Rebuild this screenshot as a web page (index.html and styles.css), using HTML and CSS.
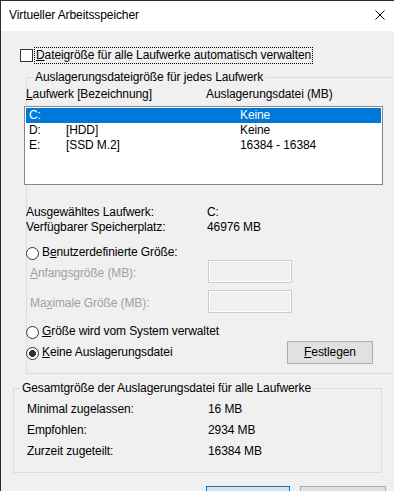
FILE: index.html
```html
<!DOCTYPE html>
<html lang="de">
<head>
<meta charset="utf-8">
<title>Virtueller Arbeitsspeicher</title>
<link rel="stylesheet" href="styles.css">
</head>
<body>
<div class="window">
  <div class="titlebar">
    <span class="title">Virtueller Arbeitsspeicher</span>
    <svg class="close" width="10" height="10" viewBox="0 0 10 10"><path d="M0.5 0.5 L9.5 9.5 M9.5 0.5 L0.5 9.5" stroke="#000" stroke-width="1" fill="none"/></svg>
  </div>
  <div class="content">
    <div class="auto-row">
      <span class="checkbox"></span>
      <span class="focus-label"><u>D</u>ateigröße für alle Laufwerke automatisch verwalten</span>
    </div>

    <fieldset class="group group-drives">
      <legend>Auslagerungsdateigröße für jedes Laufwerk</legend>
      <div class="list-header">
        <span class="col-drive"><u>L</u>aufwerk [Bezeichnung]</span>
        <span>Auslagerungsdatei (MB)</span>
      </div>
      <div class="listbox">
        <div class="list-row selected"><span>C:</span><span></span><span>Keine</span></div>
        <div class="list-row"><span>D:</span><span>[HDD]</span><span>Keine</span></div>
        <div class="list-row"><span>E:</span><span>[SSD M.2]</span><span>16384 - 16384</span></div>
      </div>
      <div class="info">
        <div class="info-row"><span class="info-label">Ausgewähltes Laufwerk:</span><span>C:</span></div>
        <div class="info-row"><span class="info-label">Verfügbarer Speicherplatz:</span><span>46976 MB</span></div>
      </div>
      <div class="radio-row radio-custom">
        <span class="radio"></span>
        <span class="radio-label">B<u>e</u>nutzerdefinierte Größe:</span>
      </div>
      <div class="field-row">
        <span class="field-label"><u>A</u>nfangsgröße (MB):</span>
        <span class="textbox"></span>
      </div>
      <div class="field-row field-second">
        <span class="field-label">Ma<u>x</u>imale Größe (MB):</span>
        <span class="textbox"></span>
      </div>
      <div class="radio-row radio-system">
        <span class="radio"></span>
        <span class="radio-label"><u>G</u>röße wird vom System verwaltet</span>
      </div>
      <div class="set-row">
        <div class="radio-item">
          <span class="radio checked"></span>
          <span class="radio-label"><u>K</u>eine Auslagerungsdatei</span>
        </div>
        <button class="btn"><u>F</u>estlegen</button>
      </div>
    </fieldset>

    <fieldset class="group group-total">
      <legend>Gesamtgröße der Auslagerungsdatei für alle Laufwerke</legend>
      <div class="total-rows">
        <div class="total-row"><span class="total-label">Minimal zugelassen:</span><span>16 MB</span></div>
        <div class="total-row"><span class="total-label">Empfohlen:</span><span>2934 MB</span></div>
        <div class="total-row"><span class="total-label">Zurzeit zugeteilt:</span><span>16384 MB</span></div>
      </div>
    </fieldset>

    <div class="dialog-buttons">
      <span class="dbtn dbtn-default"></span>
      <span class="dbtn"></span>
    </div>
  </div>
</div>
</body>
</html>
```

FILE: styles.css
```css
html, body {
  margin: 0;
  padding: 0;
}
body {
  width: 394px;
  height: 491px;
  overflow: hidden;
  font-family: "Liberation Sans", Arial, sans-serif;
  font-size: 12px;
  line-height: 15px;
  letter-spacing: -0.1px;
  color: #000;
  background: #f0f0f0;
}
.window {
  height: 490px;
  overflow: hidden;
  border-top: 1px solid #2b2b2b;
  border-left: 1px solid #2b2b2b;
  background: #f0f0f0;
}
.titlebar {
  height: 30px;
  background: #fff;
  display: flex;
  justify-content: space-between;
  align-items: flex-start;
}
.title {
  margin: 7px 0 0 8px;
}
.close {
  display: block;
  margin: 9px 9px 0 0;
}
.content {
  padding-top: 16px;
}
.auto-row {
  display: flex;
  align-items: flex-start;
  margin-left: 19px;
}
.checkbox {
  width: 13px;
  height: 13px;
  box-sizing: border-box;
  border: 1px solid #333;
  background: #fff;
  margin-top: 2px;
  flex: none;
}
.focus-label {
  margin-left: 1px;
  border: 1px dotted #000;
  padding: 0 1px;
  white-space: nowrap;
}
.group {
  border: 1px solid #dcdcdc;
  padding: 0;
  min-width: 0;
  box-sizing: border-box;
}
.group legend {
  padding: 0 2px;
  margin-left: 6px;
  line-height: 15px;
  white-space: nowrap;
}
.group-drives {
  margin: 6px 0 0 25px;
  width: 380px;
}
.list-header {
  display: flex;
  margin: 2px 0 0 -1px;
  white-space: nowrap;
}
.col-drive {
  width: 180px;
}
.listbox {
  margin: 4px 0 0 -3px;
  width: 359px;
  height: 79px;
  box-sizing: border-box;
  border: 1px solid #828790;
  background: #fff;
  padding: 1px;
}
.list-row {
  display: grid;
  grid-template-columns: 37px 174px 1fr;
  padding-left: 3px;
  height: 15px;
  white-space: nowrap;
}
.list-row.selected {
  background: #0078d7;
  color: #fff;
}
.info {
  margin: 20px 0 0 -1px;
}
.info-row {
  display: flex;
}
.info-label {
  width: 181px;
}
.radio-row {
  display: flex;
  align-items: flex-start;
  margin-left: -1px;
}
.radio {
  width: 13px;
  height: 13px;
  box-sizing: border-box;
  border: 1px solid #333;
  border-radius: 50%;
  background: #fff;
  margin-top: 2px;
  flex: none;
}
.radio.checked {
  background: radial-gradient(circle, #333 0 3.2px, #fff 3.7px);
}
.radio-label {
  margin-left: 3px;
  white-space: nowrap;
}
.radio-custom {
  margin-top: 10px;
}
.field-row {
  display: flex;
  align-items: flex-start;
  margin-left: 3px;
}
.field-second {
  margin-top: 7px;
}
.field-label {
  width: 178px;
  margin-top: 6px;
  color: #a0a0a0;
  white-space: nowrap;
}
.textbox {
  width: 84px;
  height: 23px;
  box-sizing: border-box;
  border: 1px solid #cccccc;
  box-shadow: inset 0 0 0 1px #fff;
  background: #f0f0f0;
}
.radio-system {
  margin-top: 11px;
}
.set-row {
  display: flex;
  align-items: flex-start;
  margin: 2px 0 9px -1px;
}
.radio-item {
  display: flex;
  align-items: flex-start;
  width: 261px;
  margin-top: 4px;
}
.btn {
  width: 86px;
  height: 23px;
  box-sizing: border-box;
  background: #e1e1e1;
  border: 1px solid #adadad;
  padding: 0;
  margin: 0;
  font: inherit;
  letter-spacing: inherit;
  line-height: 15px;
  color: #000;
}
.group-total {
  margin: 6px 0 0 12px;
  width: 369px;
}
.group-total legend {
  line-height: 16px;
}
.total-rows {
  padding: 6px 0 13px 13px;
}
.total-row {
  display: flex;
}
.total-row + .total-row {
  margin-top: 6px;
}
.total-label {
  width: 181px;
}
.dialog-buttons {
  display: flex;
  gap: 10px;
  margin: 13px 0 0 205px;
}
.dbtn {
  width: 86px;
  height: 23px;
  box-sizing: border-box;
  background: #e1e1e1;
  border: 1px solid #adadad;
}
.dbtn-default {
  width: 84px;
  border-color: #0078d7;
}
```
